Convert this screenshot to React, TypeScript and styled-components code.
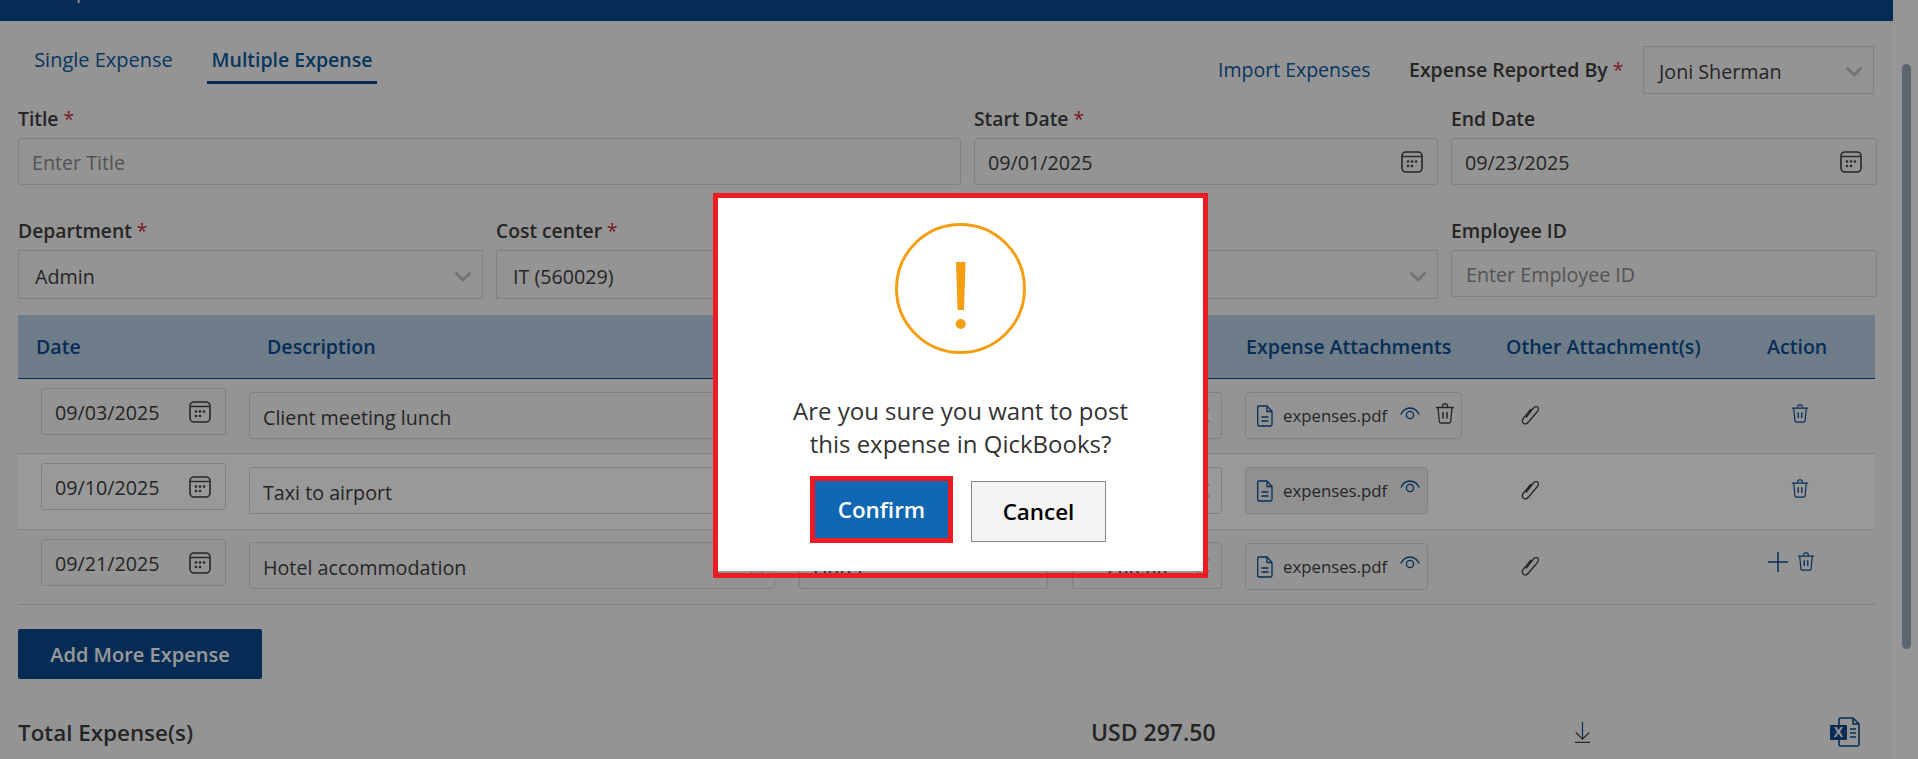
import styled, { createGlobalStyle } from 'styled-components';

const BLUE = '#0a498c';
const LINE = '#d8d8d8';
const FONT = '"Open Sans", "Noto Sans", sans-serif';

const GlobalStyle = createGlobalStyle`
  html, body {
    margin: 0;
    height: 100%;
    overflow: hidden;
    background: #f7f7f7;
    font-family: ${FONT};
  }
  * { box-sizing: border-box; }
`;

const Page = styled.div`
  display: flex;
  width: 1918px;
  height: 759px;
  overflow: hidden;
`;

const Main = styled.main`
  width: 1893px;
  height: 759px;
  overflow: hidden;
  flex: none;
`;

const Gutter = styled.div`
  flex: 1;
  padding: 64px 7px 0 9px;
  background: #fbfbfb;
`;

const Thumb = styled.div`
  height: 585px;
  border-radius: 5px;
  background: #9baabb;
`;

const TopBar = styled.div`
  height: 21px;
  overflow: hidden;
  background: ${BLUE};
`;

const TopTitle = styled.div`
  margin: -21px 0 0 12px;
  font-size: 20px;
  line-height: 24px;
  color: #fff;
`;

const HeadBar = styled.div`
  display: flex;
  justify-content: space-between;
  height: 87px;
  padding: 0 19px 0 31px;
`;

const Tabs = styled.div`
  display: flex;
  gap: 31px;
  align-items: flex-start;
  padding-top: 27px;
`;

const Tab = styled.div<{ $active?: boolean; $width: number }>`
  width: ${(p) => p.$width}px;
  padding-bottom: 9px;
  border-bottom: 3px solid ${(p) => (p.$active ? BLUE : 'transparent')};
  font-size: ${(p) => (p.$active ? 19.5 : 20)}px;
  line-height: 24px;
  font-weight: ${(p) => (p.$active ? 600 : 400)};
  color: #0d5a9e;
  text-align: center;
  white-space: nowrap;
`;

const ReportBar = styled.div`
  display: grid;
  grid-template-columns: 191px 234px 231px;
  align-items: center;
  height: 48px;
  margin-top: 25px;
`;

const ImportLink = styled.a`
  padding-bottom: 2px;
  font-size: 19.5px;
  color: #0d5a9e;
  white-space: nowrap;
`;

const Form = styled.div`
  padding: 0 16px 0 18px;
`;

const FormRow = styled.div<{ $columns: string; $top: number }>`
  display: grid;
  grid-template-columns: ${(p) => p.$columns};
  column-gap: 13px;
  align-items: start;
  margin-top: ${(p) => p.$top}px;
`;

const Label = styled.label`
  display: block;
  height: 22px;
  margin-bottom: 8px;
  font-size: 19.3px;
  line-height: 22px;
  font-weight: 600;
  color: #3e3e3e;
  white-space: nowrap;
`;

const ReportLabel = styled.span`
  padding-bottom: 2px;
  font-size: 19.5px;
  font-weight: 600;
  color: #3e3e3e;
  white-space: nowrap;
`;

const Star = styled.span`
  font-weight: 400;
  color: #cc2a3c;
`;

const Field = styled.div<{ $height?: number; $pad?: number; $right?: number }>`
  display: flex;
  align-items: center;
  height: ${(p) => p.$height ?? 47}px;
  padding: 0 ${(p) => p.$right ?? 14}px 0 ${(p) => p.$pad ?? 13}px;
  border: 1px solid ${LINE};
  border-radius: 3px;
  font-size: 19.7px;
  color: #3e3e3e;
  white-space: nowrap;
`;

const FieldText = styled.input<{ $down?: number; $centered?: boolean }>`
  flex: 1;
  min-width: 0;
  padding: ${(p) => p.$down ?? 2}px ${(p) => (p.$centered ? 8 : 0)}px 0 0;
  border: 0;
  outline: 0;
  background: transparent;
  font: inherit;
  color: inherit;
  text-align: ${(p) => (p.$centered ? 'center' : 'left')};
  &::placeholder {
    color: #8b8b8b;
    opacity: 1;
  }
`;

const SelectBox = styled.div<{ $height?: number; $pad?: number }>`
  display: flex;
  align-items: center;
  justify-content: space-between;
  height: ${(p) => p.$height ?? 49}px;
  padding: 3px 10px 0 ${(p) => p.$pad ?? 16}px;
  border: 1px solid ${LINE};
  font-size: 19.7px;
  color: #3e3e3e;
  white-space: nowrap;
`;

const Table = styled.div`
  width: 1857px;
  margin: 16px 0 0 18px;
`;

const GRID = '231px 550px 273px 173px 261px 244px 125px';

const HeaderRow = styled.div`
  display: grid;
  grid-template-columns: ${GRID};
  align-items: center;
  height: 64px;
  border-bottom: 1px solid ${BLUE};
  background: #b9cfe6;
`;

const HeaderCell = styled.div<{ $left: number }>`
  padding-left: ${(p) => p.$left}px;
  font-size: 19.6px;
  font-weight: 600;
  color: #0a4d8f;
  white-space: nowrap;
`;

const Row = styled.div<{ $height: number; $light?: boolean }>`
  display: grid;
  grid-template-columns: ${GRID};
  height: ${(p) => p.$height}px;
  border-bottom: 1px solid ${LINE};
  background: ${(p) => (p.$light ? '#fff' : 'transparent')};
`;

const Cell = styled.div<{ $top: number; $left?: number }>`
  display: flex;
  align-items: flex-start;
  padding: ${(p) => p.$top}px 0 0 ${(p) => p.$left ?? 0}px;
`;

const Sized = styled.div<{ $width: number }>`
  width: ${(p) => p.$width}px;
`;

const Chip = styled.div<{ $wide?: boolean; $shaded?: boolean }>`
  display: flex;
  align-items: flex-start;
  width: ${(p) => (p.$wide ? 217 : 183)}px;
  height: 47px;
  padding: 12px 0 0 11px;
  border: 1px solid ${LINE};
  border-radius: 4px;
  background: ${(p) => (p.$shaded ? '#f0f0f0' : 'transparent')};
  svg {
    flex: none;
  }
`;

const ChipName = styled.span`
  flex: none;
  width: 104px;
  margin: 0 13px 0 10px;
  font-size: 16.8px;
  line-height: 22px;
  color: #3e3e3e;
  white-space: nowrap;
`;

const ChipEye = styled.span<{ $top: number }>`
  margin-top: ${(p) => p.$top}px;
  line-height: 0;
`;

const ChipTrash = styled.span`
  margin: -2px 0 0 15px;
  line-height: 0;
`;

const AddButton = styled.button`
  display: block;
  width: 244px;
  height: 50px;
  margin: 24px 0 0 18px;
  border: 0;
  border-radius: 2px;
  background: ${BLUE};
  font-family: ${FONT};
  font-size: 20px;
  font-weight: 600;
  color: #fff;
`;

const TotalRow = styled.div`
  display: grid;
  grid-template-columns: 1073px 484px 255px 45px;
  align-items: center;
  height: 30px;
  margin: 37px 0 0 18px;
  font-size: 22.4px;
  font-weight: 600;
  color: #3e3e3e;
`;

const TotalAmount = styled.span`
  font-size: 23px;
`;

const Backdrop = styled.div`
  position: fixed;
  inset: 0;
  background: rgba(0, 0, 0, 0.4);
`;

const Modal = styled.div`
  position: fixed;
  top: 193px;
  left: 713px;
  width: 495px;
  height: 385px;
  padding-bottom: 2px;
  border: 5px solid #ed1c24;
`;

const ModalBody = styled.div`
  display: flex;
  flex-direction: column;
  align-items: center;
  height: 100%;
  padding-top: 25px;
  background: #fff;
`;

const Message = styled.p`
  margin: 40px 0 16px;
  font-size: 24px;
  line-height: 33px;
  color: #333;
  text-align: center;
`;

const ModalActions = styled.div`
  display: flex;
  align-items: flex-start;
  gap: 18px;
  padding-right: 5px;
`;

const ConfirmButton = styled.button`
  width: 143px;
  height: 67px;
  border: 5px solid #ed1c24;
  background: #1167b1;
  font-family: ${FONT};
  font-size: 22.4px;
  font-weight: 600;
  color: #fff;
`;

const CancelButton = styled.button`
  width: 135px;
  height: 61px;
  margin-top: 5px;
  border: 1px solid #888;
  background: #f4f4f4;
  font-family: ${FONT};
  font-size: 22.4px;
  font-weight: 600;
  color: #000;
`;

const Chevron = () => (
  <svg width="18" height="11" viewBox="0 0 18 11" fill="none">
    <path d="M1.5 1.5 9 9l7.5-7.5" stroke="#c0c0c0" strokeWidth="2.8" />
  </svg>
);

const CalendarIcon = () => (
  <svg width="22" height="22" viewBox="0 0 22 22" fill="none">
    <rect x="1" y="1" width="20" height="20" rx="4" stroke="#404040" strokeWidth="1.6" />
    <path d="M1.5 5.5h19" stroke="#404040" strokeWidth="1.4" />
    <g fill="#404040">
      <circle cx="7" cy="10.5" r="1.3" />
      <circle cx="11" cy="10.5" r="1.3" />
      <circle cx="15" cy="10.5" r="1.3" />
      <circle cx="7" cy="15" r="1.3" />
      <circle cx="11" cy="15" r="1.3" />
    </g>
  </svg>
);

const FileIcon = () => (
  <svg width="16" height="22" viewBox="0 0 16 22" fill="none" stroke="#0a4d8f" strokeWidth="1.3">
    <path d="M1.5 1h8.5l5 5.5V19.5a1.5 1.5 0 0 1-1.5 1.5h-12A1.5 1.5 0 0 1 .7 19.5V2A1 1 0 0 1 1.5 1Z" />
    <path d="M10 1v5.5h5M4.500 12h7M4.500 16h7" />
  </svg>
);

const EyeIcon = () => (
  <svg width="20" height="14" viewBox="0 0 20 14" fill="none" stroke="#0a4d8f" strokeWidth="1.3">
    <path d="M.8 7.5C3 3 6 1 10 1s7 2 9.2 6.5" />
    <circle cx="10" cy="8" r="3.6" />
  </svg>
);

const TrashIcon = ({ size = 20, color = '#404040' }: { size?: number; color?: string }) => (
  <svg width={size} height={size + 1} viewBox="0 0 20 21" fill="none" stroke={color} strokeWidth="1.3">
    <path d="M1 4.5h18M7.5 4.5V2.5a1.5 1.5 0 0 1 1.5-1.5h2a1.5 1.5 0 0 1 1.5 1.5v2" />
    <path d="M3 4.5 4.3 18.5a1.5 1.5 0 0 0 1.5 1.5h8.4a1.5 1.5 0 0 0 1.5-1.5L17 4.5" />
    <path d="M8 9v6.5M12 9v6.5" strokeWidth="1.5" />
  </svg>
);

const ClipIcon = () => (
  <svg width="20" height="20" viewBox="0 0 20 20" fill="none" stroke="#404040" strokeWidth="1.3">
    <path d="M6 12.500 13 3.500c1.500-2 3.600-2.400 4.600-1.500s1 3-.6 5L8.500 17c-1.500 1.800-3.600 2.300-5 1.200S2 15 3.500 13l7.500-9" />
  </svg>
);

const PlusIcon = () => (
  <svg width="20" height="20" viewBox="0 0 20 20" stroke="#0a4d8f" strokeWidth="1.5">
    <path d="M10 0v20M0 10h20" />
  </svg>
);

const ClearIcon = () => (
  <svg width="14" height="15" viewBox="0 0 14 15" stroke="#c4c4c4" strokeWidth="2" fill="none">
    <path d="m1 1 12 13M13 1 1 14" />
  </svg>
);

const DownloadIcon = () => (
  <svg width="15" height="21" viewBox="0 0 15 21" fill="none" stroke="#404040" strokeWidth="1.2">
    <path d="M7.5 0v17" stroke="#0a4d8f" />
    <path d="m.8 10.5 6.7 6.7 6.7-6.700M0 20.400h15" />
  </svg>
);

const ExcelIcon = () => (
  <svg width="30" height="30" viewBox="0 0 30 30" fill="none">
    <path d="M9 8V2.500A1.500 1.500 0 0 1 10.500 1H23l6 6v20.500a1.500 1.500 0 0 1-1.500 1.500h-17A1.500 1.500 0 0 1 9 27.500V23" stroke={BLUE} strokeWidth="1.6" />
    <path d="M23 1v6h6M20 12h6M20 16h6M20 20h6" stroke={BLUE} strokeWidth="1.6" />
    <rect x="0" y="8" width="17" height="15" rx="1" fill={BLUE} />
    <text x="8.5" y="20" textAnchor="middle" fontFamily="Liberation Sans" fontWeight="700" fontSize="14" fill="#fff">X</text>
  </svg>
);

const WarningIcon = () => (
  <svg width="131" height="131" viewBox="0 0 131 131" fill="none">
    <circle cx="65.5" cy="65.5" r="64" stroke="#f59e12" strokeWidth="3" />
    <path d="M61 39h9.5L69 87h-6.5Z" fill="#f59e12" />
    <circle cx="65.7" cy="101" r="5" fill="#f59e12" />
  </svg>
);

type Expense = {
  date: string;
  description: string;
  category: string;
  amount: string;
  height: number;
  descTop: number;
  eyeTop: number;
  light?: boolean;
  shadedChip?: boolean;
  removable?: boolean;
  last?: boolean;
};

const expenses: Expense[] = [
  { date: '09/03/2025', description: 'Client meeting lunch', category: 'Meals', amount: '47.50', height: 75, descTop: 13, eyeTop: 2, removable: true },
  { date: '09/10/2025', description: 'Taxi to airport', category: 'Travel', amount: '50.00', height: 76, descTop: 13, eyeTop: 0, light: true, shadedChip: true },
  { date: '09/21/2025', description: 'Hotel accommodation', category: 'Hotel', amount: '200.00', height: 75, descTop: 12, eyeTop: 0, last: true },
];

const Required = () => <Star>*</Star>;

export default function App() {
  return (
    <Page>
      <GlobalStyle />
      <Main>
        <TopBar>
          <TopTitle>Add Expense</TopTitle>
        </TopBar>
        <HeadBar>
          <Tabs>
            <Tab $width={145}>Single Expense</Tab>
            <Tab $width={170} $active>Multiple Expense</Tab>
          </Tabs>
          <ReportBar>
            <ImportLink>Import Expenses</ImportLink>
            <ReportLabel>Expense Reported By <Required /></ReportLabel>
            <SelectBox $height={48} $pad={15}>
              Joni Sherman
              <Chevron />
            </SelectBox>
          </ReportBar>
        </HeadBar>
        <Form>
          <FormRow $columns="943px 464px 426px" $top={0}>
            <div>
              <Label>Title <Required /></Label>
              <Field><FieldText placeholder="Enter Title" readOnly /></Field>
            </div>
            <div>
              <Label>Start Date <Required /></Label>
              <Field><FieldText defaultValue="09/01/2025" readOnly /><CalendarIcon /></Field>
            </div>
            <div>
              <Label>End Date</Label>
              <Field><FieldText defaultValue="09/23/2025" readOnly /><CalendarIcon /></Field>
            </div>
          </FormRow>
          <FormRow $columns="465px 465px 464px 426px" $top={35}>
            <div>
              <Label>Department <Required /></Label>
              <SelectBox>Admin<Chevron /></SelectBox>
            </div>
            <div>
              <Label>Cost center <Required /></Label>
              <SelectBox>IT (560029)<Chevron /></SelectBox>
            </div>
            <div>
              <Label>Currency</Label>
              <SelectBox>USD<Chevron /></SelectBox>
            </div>
            <div>
              <Label>Employee ID</Label>
              <Field $pad={14}><FieldText placeholder="Enter Employee ID" readOnly /></Field>
            </div>
          </FormRow>
        </Form>
        <Table>
          <HeaderRow>
            <HeaderCell $left={18}>Date</HeaderCell>
            <HeaderCell $left={18}>Description</HeaderCell>
            <HeaderCell $left={18}>Category</HeaderCell>
            <HeaderCell $left={0}>Amount</HeaderCell>
            <HeaderCell $left={1}>Expense Attachments</HeaderCell>
            <HeaderCell $left={0}>Other Attachment(s)</HeaderCell>
            <HeaderCell $left={17}>Action</HeaderCell>
          </HeaderRow>
          {expenses.map((item) => (
            <Row key={item.date} $height={item.height} $light={item.light}>
              <Cell $top={9} $left={23}>
                <Sized $width={185}>
                  <Field><FieldText defaultValue={item.date} readOnly /><CalendarIcon /></Field>
                </Sized>
              </Cell>
              <Cell $top={item.descTop}>
                <Sized $width={526}>
                  <Field $right={10}><FieldText defaultValue={item.description} readOnly $down={3} /><ClearIcon /></Field>
                </Sized>
              </Cell>
              <Cell $top={item.descTop}>
                <Sized $width={249}>
                  <Field><FieldText defaultValue={item.category} readOnly $down={3} /></Field>
                </Sized>
              </Cell>
              <Cell $top={item.descTop}>
                <Sized $width={150}>
                  <Field $right={11}><FieldText defaultValue={item.amount} readOnly $down={3} $centered /><ClearIcon /></Field>
                </Sized>
              </Cell>
              <Cell $top={13}>
                <Chip $wide={item.removable} $shaded={item.shadedChip}>
                  <FileIcon />
                  <ChipName>expenses.pdf</ChipName>
                  <ChipEye $top={item.eyeTop}><EyeIcon /></ChipEye>
                  {item.removable && <ChipTrash><TrashIcon /></ChipTrash>}
                </Chip>
              </Cell>
              <Cell $top={26} $left={14}>
                <ClipIcon />
              </Cell>
              {item.last ? (
                <Cell $top={22} $left={18}>
                  <PlusIcon />
                  <Sized $width={9} />
                  <TrashIcon size={18} color="#0a4d8f" />
                </Cell>
              ) : (
                <Cell $top={25} $left={41}>
                  <TrashIcon size={18} color="#0a4d8f" />
                </Cell>
              )}
            </Row>
          ))}
        </Table>
        <AddButton>Add More Expense</AddButton>
        <TotalRow>
          <span>Total Expense(s)</span>
          <TotalAmount>USD 297.50</TotalAmount>
          <DownloadIcon />
          <ExcelIcon />
        </TotalRow>
      </Main>
      <Gutter>
        <Thumb />
      </Gutter>
      <Backdrop />
      <Modal>
        <ModalBody>
          <WarningIcon />
          <Message>
            Are you sure you want to post
            <br />
            this expense in QickBooks?
          </Message>
          <ModalActions>
            <ConfirmButton>Confirm</ConfirmButton>
            <CancelButton>Cancel</CancelButton>
          </ModalActions>
        </ModalBody>
      </Modal>
    </Page>
  );
}
